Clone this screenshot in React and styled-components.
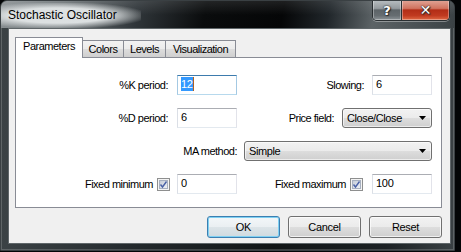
import React from 'react'
import styled, { createGlobalStyle } from 'styled-components'

const GlobalStyle = createGlobalStyle`
  html, body {
    margin: 0;
    padding: 0;
    background: #030506;
  }
  body {
    width: 461px;
    height: 252px;
    overflow: hidden;
    font-family: "Liberation Sans", Arial, sans-serif;
  }
`

const Window = styled.div`
  width: 455px;
  height: 251px;
  box-sizing: border-box;
  border: 1px solid #3a4043;
  border-radius: 7px 7px 0 0;
  background: linear-gradient(90deg, #3b4245 0%, #23292c 30%, #111516 60%, #1c2124 85%, #3a4144 100%);
  box-shadow: inset 0 0 0 1px rgba(255, 255, 255, 0.18);
  display: flex;
  flex-direction: column;
  overflow: hidden;
`

const TitleBar = styled.div`
  height: 27px;
  flex: none;
  display: flex;
  align-items: flex-start;
  justify-content: space-between;
  padding: 0 4px 0 0;
  background:
    linear-gradient(180deg, rgba(255, 255, 255, 0.1), rgba(255, 255, 255, 0) 14px),
    linear-gradient(100deg, #8a9093 0%, #6e7578 14%, #30363a 30%, #0a0c0d 45%, #050607 62%, #20262a 72%, #5c6366 82%, #3b4245 100%);
`

const TitleText = styled.span`
  margin-top: 2px;
  margin-left: -10px;
  padding: 5px 24px 5px 17px;
  font-size: 12px;
  line-height: 15px;
  color: #000;
  background: radial-gradient(ellipse 60% 55% at 45% 50%, rgba(222, 226, 227, 0.98) 55%, rgba(200, 205, 207, 0) 100%);
`

const CaptionGroup = styled.div`
  display: flex;
  margin-top: -1px;
  height: 20px;
  border: 1px solid #2a2f32;
  border-top: none;
  border-radius: 0 0 5px 5px;
  overflow: hidden;
  box-shadow: 0 1px 0 rgba(255, 255, 255, 0.35);
`

const CaptionButton = styled.div`
  width: ${p => p.width}px;
  display: flex;
  align-items: center;
  justify-content: center;
  font-family: "DejaVu Sans", sans-serif;
  font-weight: bold;
  font-size: ${p => p.size}px;
  color: #fff;
  text-shadow: 0 0 1px #222, 0 0 2px #222, 1px 1px 1px #333;
  box-shadow: inset 0 0 0 1px rgba(255, 255, 255, 0.35);
  background: ${p => p.danger
    ? 'linear-gradient(180deg, #e1a698 0%, #d0735f 42%, #b22d17 50%, #c03a20 78%, #e06a45 100%)'
    : 'linear-gradient(180deg, #b9bfc2 0%, #949a9e 42%, #5d6468 50%, #666d71 78%, #8d9498 100%)'};
  & + & {
    border-left: 1px solid #2a2f32;
  }
`

const Frame = styled.div`
  flex: 1;
  display: flex;
  padding: 0 3px 6px 7px;
`

const Client = styled.div`
  flex: 1;
  display: flex;
  flex-direction: column;
  border: 1px solid #5f6669;
  background: #f0f0f0;
  padding: 8px 8px 5px 6px;
`

const TabStrip = styled.div`
  display: flex;
  align-items: flex-end;
  height: 20px;
  position: relative;
  z-index: 1;
`

const Tab = styled.div`
  box-sizing: border-box;
  width: ${p => p.width}px;
  height: ${p => (p.active ? 21 : 17)}px;
  margin-bottom: ${p => (p.active ? -1 : 0)}px;
  margin-left: ${p => (p.first ? 0 : -1)}px;
  padding-top: 2px;
  border: 1px solid #898c95;
  border-bottom: none;
  background: ${p => (p.active ? '#fff' : 'linear-gradient(180deg, #f2f2f2 0%, #ebebeb 50%, #dddddd 51%, #cfcfcf 100%)')};
  font-size: 11px;
  letter-spacing: -0.5px;
  line-height: 13px;
  color: #000;
  text-align: center;
  white-space: nowrap;
`

const Panel = styled.div`
  box-sizing: border-box;
  height: 151px;
  border: 1px solid #898c95;
  background: #fff;
  padding: 17px 9px 0 0;
  display: flex;
  flex-direction: column;
  gap: 13px;
`

const Row = styled.div`
  display: flex;
  height: 20px;
  justify-content: ${p => (p.wide ? 'flex-end' : 'flex-start')};
  align-items: center;
`

const Half = styled.div`
  display: flex;
  align-items: center;
  justify-content: flex-end;
  ${p => (p.left ? 'width: 221px;' : 'flex: 1;')}
`

const Label = styled.span`
  font-size: 11px;
  letter-spacing: -0.5px;
  color: #000;
  white-space: nowrap;
  margin-right: ${p => p.gap}px;
`

const TextBox = styled.div`
  box-sizing: border-box;
  width: 60px;
  height: 20px;
  border: 1px solid;
  border-color: ${p => (p.focused ? '#3d7bad #a4c9e3 #b7d9ed #a4c9e3' : '#abadb3 #e2e3ea #e3e9ef #dbdfe6')};
  background: #fff;
  padding-left: 3px;
  font-size: 11px;
  letter-spacing: -0.3px;
  line-height: 17px;
  color: #000;
`

const Selected = styled.span`
  background: #3399ff;
  color: #fff;
  padding: 1px 0;
  border-right: 1px solid #b06020;
`

const Combo = styled.div`
  box-sizing: border-box;
  width: ${p => p.width}px;
  height: 20px;
  border: 1px solid #707070;
  border-radius: 3px;
  background: linear-gradient(180deg, #f2f2f2 0%, #ebebeb 50%, #dddddd 51%, #cfcfcf 100%);
  box-shadow: inset 0 0 0 1px rgba(255, 255, 255, 0.6);
  display: flex;
  align-items: center;
  justify-content: space-between;
  padding: 0 5px 0 4px;
  font-size: 11px;
  letter-spacing: -0.4px;
  color: #000;
`

const CheckWrap = styled.svg`
  margin-right: ${p => p.gap}px;
  flex: none;
`

const ButtonRow = styled.div`
  display: flex;
  justify-content: flex-end;
  gap: 8px;
  margin-top: 8px;
`

const Button = styled.div`
  box-sizing: border-box;
  width: 73px;
  height: 22px;
  border: 1px solid ${p => (p.primary ? '#3c7fb1' : '#707070')};
  border-radius: 3px;
  background: ${p => (p.primary
    ? 'linear-gradient(180deg, #f3f7f9 0%, #eaeff2 50%, #dce4e8 51%, #d0dadf 100%)'
    : 'linear-gradient(180deg, #f2f2f2 0%, #ebebeb 50%, #dddddd 51%, #cfcfcf 100%)')};
  box-shadow: inset 0 0 0 1px ${p => (p.primary ? '#7fd0f2' : 'rgba(255,255,255,0.7)')};
  display: flex;
  align-items: center;
  justify-content: center;
  font-size: 11px;
  letter-spacing: -0.3px;
  color: #000;
`

function Check({ gap }) {
  return (
    <CheckWrap gap={gap} width="13" height="13" viewBox="0 0 13 13">
      <defs>
        <linearGradient id="cbfill" x1="0" y1="0" x2="1" y2="1">
          <stop offset="0" stopColor="#c3cad6" />
          <stop offset="1" stopColor="#f1f3f7" />
        </linearGradient>
      </defs>
      <rect x="0.5" y="0.5" width="12" height="12" fill="#f4f4f4" stroke="#8e8f8f" />
      <rect x="2.5" y="2.5" width="8" height="8" fill="url(#cbfill)" stroke="#a7b0c0" />
      <path d="M3.5 6.5 L5.5 9 L9.5 3.5" fill="none" stroke="#4a62a6" strokeWidth="1.4" />
    </CheckWrap>
  )
}

function Arrow() {
  return (
    <svg width="7" height="4" viewBox="0 0 7 4">
      <path d="M0 0 H7 L3.5 4 Z" fill="#000" />
    </svg>
  )
}

export default function App() {
  return (
    <>
      <GlobalStyle />
      <Window>
        <TitleBar>
          <TitleText>Stochastic Oscillator</TitleText>
          <CaptionGroup>
            <CaptionButton width={28} size={13}>?</CaptionButton>
            <CaptionButton width={47} size={14} danger>✕</CaptionButton>
          </CaptionGroup>
        </TitleBar>
        <Frame>
          <Client>
            <TabStrip>
              <Tab first active width={68}>Parameters</Tab>
              <Tab width={42}>Colors</Tab>
              <Tab width={43}>Levels</Tab>
              <Tab width={71}>Visualization</Tab>
            </TabStrip>
            <Panel>
              <Row>
                <Half left>
                  <Label gap={9}>%K period:</Label>
                  <TextBox focused><Selected>12</Selected></TextBox>
                </Half>
                <Half>
                  <Label gap={8}>Slowing:</Label>
                  <TextBox>6</TextBox>
                </Half>
              </Row>
              <Row>
                <Half left>
                  <Label gap={9}>%D period:</Label>
                  <TextBox>6</TextBox>
                </Half>
                <Half>
                  <Label gap={8}>Price field:</Label>
                  <Combo width={90}>Close/Close<Arrow /></Combo>
                </Half>
              </Row>
              <Row wide>
                <Label gap={7}>MA method:</Label>
                <Combo width={188}>Simple<Arrow /></Combo>
              </Row>
              <Row>
                <Half left>
                  <Label gap={4}>Fixed minimum</Label>
                  <Check gap={7} />
                  <TextBox>0</TextBox>
                </Half>
                <Half>
                  <Label gap={4}>Fixed maximum</Label>
                  <Check gap={9} />
                  <TextBox>100</TextBox>
                </Half>
              </Row>
            </Panel>
            <ButtonRow>
              <Button primary>OK</Button>
              <Button>Cancel</Button>
              <Button>Reset</Button>
            </ButtonRow>
          </Client>
        </Frame>
      </Window>
    </>
  )
}
